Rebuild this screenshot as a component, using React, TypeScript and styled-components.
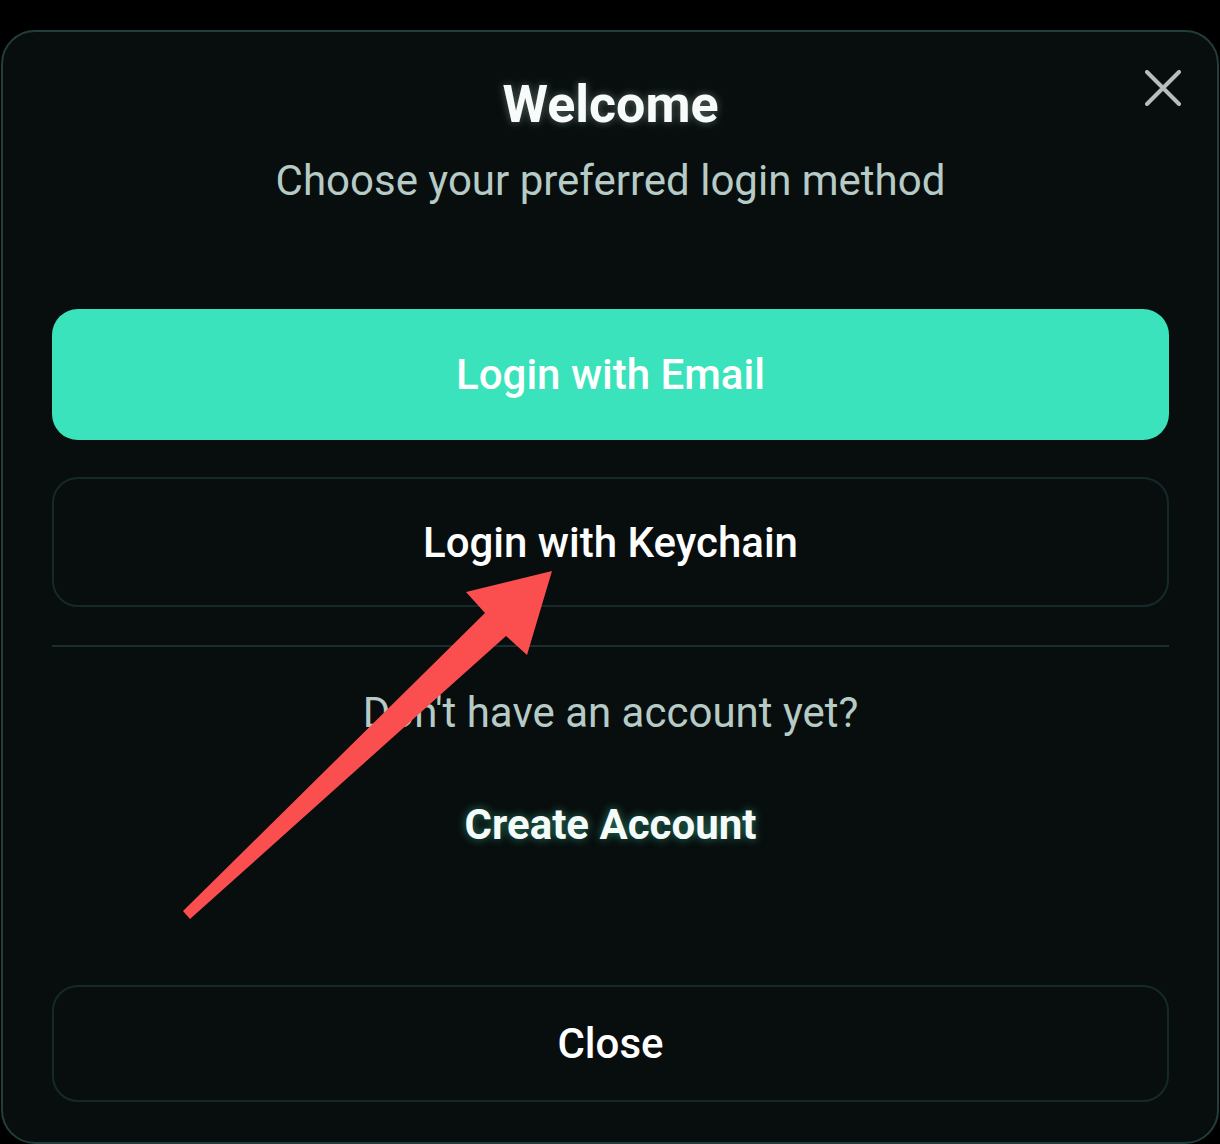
import React from "react";
import styled, { createGlobalStyle } from "styled-components";

const Global = createGlobalStyle`
  html, body {
    margin: 0;
    padding: 0;
    background: #000000;
    font-family: Roboto, "Noto Sans", Arial, sans-serif;
  }
  * { box-sizing: border-box; }
`;

const Page = styled.div`
  position: relative;
  width: 1220px;
  height: 1144px;
  overflow: hidden;
  background: #000000;
  padding-top: 30px;
  padding-left: 1px;
`;

const Modal = styled.div`
  position: relative;
  width: 1218px;
  height: 1114px;
  background: #080e0e;
  border: 2px solid #223d3c;
  border-radius: 34px;
  padding: 42px 48px 0 49px;
  display: flex;
  flex-direction: column;
  align-items: stretch;
`;

const CloseIcon = styled.button`
  position: absolute;
  top: 36px;
  right: 34px;
  width: 40px;
  height: 40px;
  padding: 0;
  border: none;
  background: transparent;
  display: flex;
  align-items: center;
  justify-content: center;
  cursor: pointer;
`;

const Title = styled.h1`
  margin: 0;
  font-size: 52px;
  line-height: 62px;
  font-weight: 700;
  color: #f7fbfa;
  text-align: center;
  text-shadow: 0 0 8px rgba(220, 255, 245, 0.35);
`;

const Subtitle = styled.p`
  margin: 20px 0 0;
  font-size: 42px;
  line-height: 50px;
  font-weight: 400;
  color: #b6cbc6;
  text-align: center;
`;

const Actions = styled.div`
  margin-top: 103px;
  display: flex;
  flex-direction: column;
  gap: 37px;
`;

const Button = styled.button<{ $primary?: boolean; $height: number }>`
  width: 100%;
  height: ${(p) => p.$height}px;
  border-radius: 26px;
  border: ${(p) => (p.$primary ? "none" : "2px solid #16292a")};
  background: ${(p) => (p.$primary ? "#3ae3bb" : "transparent")};
  color: #ffffff;
  font-family: Roboto, "Noto Sans", Arial, sans-serif;
  font-size: 42px;
  font-weight: 500;
  display: flex;
  align-items: center;
  justify-content: center;
  cursor: pointer;
`;

const Divider = styled.hr`
  margin: 38px 0 0;
  border: none;
  height: 2px;
  background: #1a2e2e;
`;

const Prompt = styled.p`
  margin: 41px 0 0;
  font-size: 42px;
  line-height: 50px;
  font-weight: 400;
  color: #b6cbc6;
  text-align: center;
`;

const CreateLink = styled.a`
  margin-top: 62px;
  align-self: center;
  font-size: 42px;
  line-height: 50px;
  font-weight: 700;
  color: #f4fbf9;
  text-decoration: none;
  text-shadow: 0 0 10px rgba(70, 230, 185, 0.5);
  cursor: pointer;
`;

const Footer = styled.div`
  margin-top: auto;
  margin-bottom: 40px;
`;

const ArrowOverlay = styled.svg`
  position: absolute;
  left: 0;
  top: 0;
  pointer-events: none;
`;

export default function App() {
  return (
    <>
      <Global />
      <Page>
        <Modal>
          <CloseIcon aria-label="Close">
            <svg width="36" height="36" viewBox="0 0 36 36">
              <path
                d="M2 2 L34 34 M34 2 L2 34"
                stroke="#b7bdbd"
                strokeWidth="4"
                strokeLinecap="round"
              />
            </svg>
          </CloseIcon>
          <Title>Welcome</Title>
          <Subtitle>Choose your preferred login method</Subtitle>
          <Actions>
            <Button $primary $height={131}>Login with Email</Button>
            <Button $height={130}>Login with Keychain</Button>
          </Actions>
          <Divider />
          <Prompt>Don't have an account yet?</Prompt>
          <CreateLink>Create Account</CreateLink>
          <Footer>
            <Button $height={117}>Close</Button>
          </Footer>
        </Modal>
        <ArrowOverlay width="1220" height="1144" viewBox="0 0 1220 1144">
          <polygon
            points="552,571 527,655 506,636 190,919 183,911 485,613 466,592"
            fill="#fb4e4e"
          />
        </ArrowOverlay>
      </Page>
    </>
  );
}
